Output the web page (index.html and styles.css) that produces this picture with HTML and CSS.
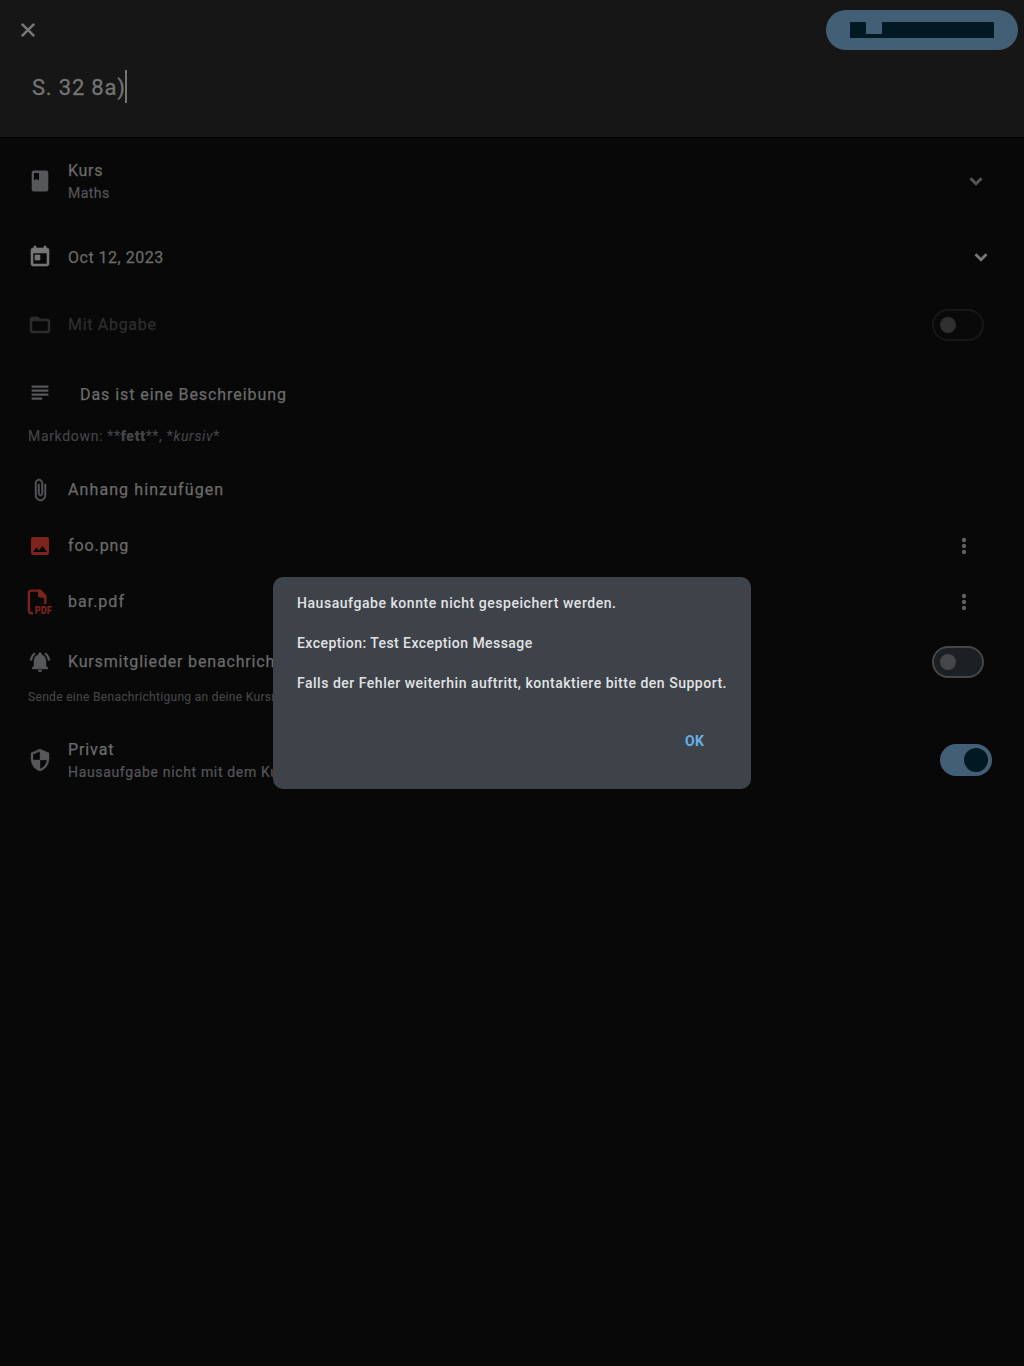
FILE: index.html
```html
<!DOCTYPE html>
<html lang="de">
<head>
<meta charset="utf-8">
<title>Hausaufgabe</title>
<link rel="stylesheet" href="styles.css">
</head>
<body>
<header class="header">
  <div class="toolbar">
    <svg class="close" viewBox="0 0 24 24"><path d="M5.800 5.800L18.200 18.200M18.200 5.800L5.800 18.200"/></svg>
    <div class="save"><i class="block"></i><i class="block descender"></i><i class="block rest"></i></div>
  </div>
  <div class="title"><span class="title-text">S. 32 8a)</span><span class="caret"></span></div>
</header>
<main>
  <section class="row course">
    <svg class="icon" viewBox="0 0 24 24"><path d="M18.300 1.500H5.700c-1.100 0-2 .9-2 2v17c0 1.100.9 2 2 2h12.600c1.100 0 2-.9 2-2v-17c0-1.100-.9-2-2-2zM6 4h5v7.500l-2.500-1.500L6 11.500V4z"/></svg>
    <div class="texts"><div class="label t-kurs">Kurs</div><div class="sub t-maths">Maths</div></div>
    <svg class="chevron" viewBox="0 0 24 24"><path d="M6.500 9.200L12 14.700L17.500 9.200"/></svg>
  </section>
  <section class="row date">
    <svg class="icon bright" viewBox="0 0 24 24"><path d="M19 3h-1V1h-2v2H8V1H6v2H5c-1.110 0-1.990.9-1.990 2L3 19c0 1.100.89 2 2 2h14c1.100 0 2-.9 2-2V5c0-1.100-.9-2-2-2zm0 16H5V8h14v11zM7 10h5v5H7z"/></svg>
    <div class="texts"><div class="label t-date">Oct 12, 2023</div></div>
    <svg class="chevron bright-line" viewBox="0 0 24 24"><path d="M6.500 9.200L12 14.700L17.500 9.200"/></svg>
  </section>
  <section class="row submit">
    <svg class="icon faint" viewBox="0 0 24 24"><path d="M20 6h-8l-2-2H4c-1.100 0-1.990.9-1.990 2L2 18c0 1.100.9 2 2 2h16c1.100 0 2-.9 2-2V8c0-1.100-.9-2-2-2zm0 12H4V8h16v10z"/></svg>
    <div class="texts"><div class="label t-abgabe">Mit Abgabe</div></div>
    <div class="switch disabled"><i></i></div>
  </section>
  <section class="row description">
    <svg class="icon" viewBox="0 0 24 24"><path d="M3.600 4.500h16.800v2.200H3.600zM3.600 8.500h16.800v2.200H3.600zM3.600 12.500h16.800v2.200H3.600zM3.600 16.500h10.600v2.200H3.600z"/></svg>
    <div class="texts"><div class="label t-desc">Das ist eine Beschreibung</div></div>
  </section>
  <p class="hint markdown">Markdown: **<b>fett</b>**, *<em>kursiv</em>*</p>
  <section class="row file">
    <svg class="icon clip" viewBox="0 0 24 24"><path d="M16.500 6v11.500c0 2.210-1.790 4-4 4s-4-1.790-4-4V5c0-1.380 1.120-2.500 2.500-2.500s2.500 1.120 2.500 2.500v10.500c0 .55-.45 1-1 1s-1-.45-1-1V6H10v9.500c0 1.380 1.120 2.500 2.500 2.500s2.500-1.120 2.500-2.500V5c0-2.210-1.790-4-4-4S7 2.790 7 5v12.500c0 3.040 2.460 5.500 5.500 5.500s5.500-2.460 5.500-5.500V6h-1.500z"/></svg>
    <div class="texts"><div class="label t-anhang">Anhang hinzufügen</div></div>
  </section>
  <section class="row file">
    <svg class="icon red" viewBox="0 0 24 24"><path d="M21 19V5c0-1.100-.9-2-2-2H5c-1.100 0-2 .9-2 2v14c0 1.100.9 2 2 2h14c1.100 0 2-.9 2-2zM8.500 13.500l2.500 3.010L14.500 12l4.500 6H5l3.500-4.500z"/></svg>
    <div class="texts"><div class="label t-foo">foo.png</div></div>
    <svg class="more" viewBox="0 0 24 24"><circle cx="12" cy="6" r="2.200"/><circle cx="12" cy="12" r="2.200"/><circle cx="12" cy="18" r="2.200"/></svg>
  </section>
  <section class="row file">
    <svg class="icon red pdf" viewBox="0 0 24 24"><path class="sheet" d="M5 23.200H3.500Q.9 23.200.9 20.500V3Q.9.6 3.300.6H12L17.300 6V14"/><path d="M10 0h3l5 5v2.800h-5.500Q10 7.800 10 5.500z"/><text x="6.800" y="24.300" textLength="17" lengthAdjust="spacingAndGlyphs">PDF</text></svg>
    <div class="texts"><div class="label t-bar">bar.pdf</div></div>
    <svg class="more" viewBox="0 0 24 24"><circle cx="12" cy="6" r="2.200"/><circle cx="12" cy="12" r="2.200"/><circle cx="12" cy="18" r="2.200"/></svg>
  </section>
  <section class="row notify">
    <svg class="icon bold" viewBox="0 0 24 24"><path d="M7.580 4.080L6.150 2.650C3.750 4.480 2.170 7.300 2.030 10.500h2c.15-2.650 1.510-4.970 3.550-6.420zm12.390 6.420h2c-.15-3.200-1.730-6.020-4.120-7.850l-1.420 1.430c2.020 1.450 3.390 3.770 3.540 6.420zM18 11c0-3.070-1.640-5.640-4.500-6.320V4c0-.83-.67-1.500-1.500-1.500s-1.500.67-1.500 1.500v.68C7.630 5.360 6 7.920 6 11v5l-2 2v1h16v-1l-2-2v-5zm-6 11c.14 0 .27-.01.4-.04.65-.14 1.180-.58 1.440-1.180.1-.24.15-.5.15-.78h-4c.01 1.100.9 2 2.010 2z"/></svg>
    <div class="texts"><div class="label t-notify">Kursmitglieder benachrichtigen</div></div>
    <div class="switch"><i></i></div>
  </section>
  <p class="hint small">Sende eine Benachrichtigung an deine Kursmitglieder, dass du eine neue Hausaufgabe erstellt hast.</p>
  <section class="row private">
    <svg class="icon bold" viewBox="0 0 24 24"><path fill-rule="evenodd" d="M12 1L3 5v6c0 5.550 3.840 10.740 9 12 5.160-1.260 9-6.450 9-12V5l-9-4zm0 10.990h7c-.53 4.120-3.280 7.790-7 8.940V12H5V6.300l7-3.110v8.800z"/></svg>
    <div class="texts"><div class="label t-privat">Privat</div><div class="sub t-haus">Hausaufgabe nicht mit dem Kurs teilen.</div></div>
    <div class="switch on"><i></i></div>
  </section>
</main>
<div class="overlay">
  <div class="dialog">
    <p class="d1">Hausaufgabe konnte nicht gespeichert werden.</p>
    <p class="d2">Exception: Test Exception Message</p>
    <p class="d3">Falls der Fehler weiterhin auftritt, kontaktiere bitte den Support.</p>
    <button class="ok">OK</button>
  </div>
</div>
</body>
</html>
```

FILE: styles.css
```css
* { box-sizing: border-box; }
body { margin: 0; height: 1366px; overflow: hidden; background: #080808; color: #6b6b6b; font-family: Roboto, "Liberation Sans", sans-serif; }
p { margin: 0; }
i { display: block; }

.header { height: 138px; background: #161616; border-bottom: 1px solid #000; }
.toolbar { display: flex; justify-content: space-between; align-items: center; height: 60px; padding: 0 6px 0 16px; }
.close { width: 24px; height: 24px; fill: none; stroke: #777; stroke-width: 2.6; }
.save { display: flex; width: 192px; height: 40px; padding: 12px 24px; border-radius: 20px; background: #435f75; }
.block { width: 16px; height: 16px; background: #001923; }
.descender { height: 4px; margin-top: 12px; }
.rest { width: 112px; }
.title { display: flex; align-items: center; height: 53px; padding-left: 32px; }
.title-text { width: 93px; padding-top: 2px; white-space: nowrap; font-size: 22px; letter-spacing: .8px; color: #747474; -webkit-text-stroke: .3px; }
.caret { width: 2px; height: 33px; background: #747474; }

.row { display: flex; align-items: center; padding: 0 40px 0 28px; }
.icon { width: 24px; height: 24px; flex: none; fill: #56575b; margin-right: 16px; overflow: visible; }
.bright { fill: #757575; stroke: #757575; stroke-width: .6; }
.faint { fill: #2c2c2d; stroke: #2c2c2d; stroke-width: .5; }
.bold, .clip { stroke: #56575b; stroke-width: .4; }
.red { fill: #7c231e; }
.texts { flex: 1; min-width: 0; white-space: nowrap; }
.label { font-size: 16px; line-height: 24px; letter-spacing: .7px; -webkit-text-stroke: .25px; }
.sub { font-size: 14px; line-height: 20px; letter-spacing: .45px; color: #55565a; -webkit-text-stroke: .2px; }
.t-date { padding-top: 2px; letter-spacing: .5px; }
.t-desc { letter-spacing: .93px; }
.t-anhang { letter-spacing: 1.1px; }
.t-foo { letter-spacing: .9px; }
.t-bar { letter-spacing: 1px; }
.t-notify { letter-spacing: .83px; }
.t-privat { letter-spacing: .9px; }
.t-haus { letter-spacing: .66px; }

.course { height: 86px; padding-right: 36px; }
.date { height: 64px; margin-top: 1px; margin-bottom: 1px; padding-right: 31px; }
.date .icon { margin-top: -1px; }
.submit { height: 70px; }
.submit .label { color: #2e2e2e; }
.description { height: 66px; }
.description .label { padding: 3px 0 0 12px; }
.file { height: 56px; }
.notify { height: 48px; margin-top: 8px; }
.private { height: 72px; margin-top: 16px; padding-right: 32px; }

.chevron { width: 24px; height: 24px; fill: none; stroke: #56575b; stroke-width: 2.8; }
.bright-line { stroke: #777; }
.more { width: 24px; height: 24px; margin-right: 8px; fill: #606064; }

.pdf .sheet { fill: none; stroke: #7c231e; stroke-width: 2.4; }
.pdf text { font-size: 11px; font-weight: 900; }

.hint { padding-left: 28px; white-space: nowrap; color: #444547; -webkit-text-stroke: .15px; }
.markdown { height: 36px; line-height: 20px; font-size: 14px; letter-spacing: .68px; }
.markdown b { font-weight: 900; }
.small { height: 22px; line-height: 22px; font-size: 12px; letter-spacing: .32px; }

.switch { width: 52px; height: 32px; padding: 6px; border: 2px solid #444648; border-radius: 16px; background: #1c2023; }
.switch i { width: 16px; height: 16px; border-radius: 50%; background: #444648; }
.switch.disabled { background: #090909; border-color: #161717; }
.switch.disabled i { background: #303031; }
.switch.on { padding: 4px 4px 4px 24px; border: 0; background: #435f75; }
.switch.on i { width: 24px; height: 24px; background: #001923; }

.overlay { position: absolute; inset: 0; display: flex; align-items: center; justify-content: center; }
.dialog { display: flex; flex-direction: column; gap: 20px; width: 478px; height: 212px; padding: 16px 24px; border-radius: 10px; background: #3d4349; color: #e2e2e5; font-size: 14px; line-height: 20px; font-weight: 500; letter-spacing: .3px; white-space: nowrap; }
.d1 { letter-spacing: .55px; }
.d2 { letter-spacing: .44px; }
.d3 { letter-spacing: .51px; }
.ok { align-self: flex-end; margin: 8px 11px 0 0; padding: 10px 12px; border: 0; background: none; color: #68b0e8; font: 700 14px/20px Roboto, sans-serif; letter-spacing: .2px; }
```
